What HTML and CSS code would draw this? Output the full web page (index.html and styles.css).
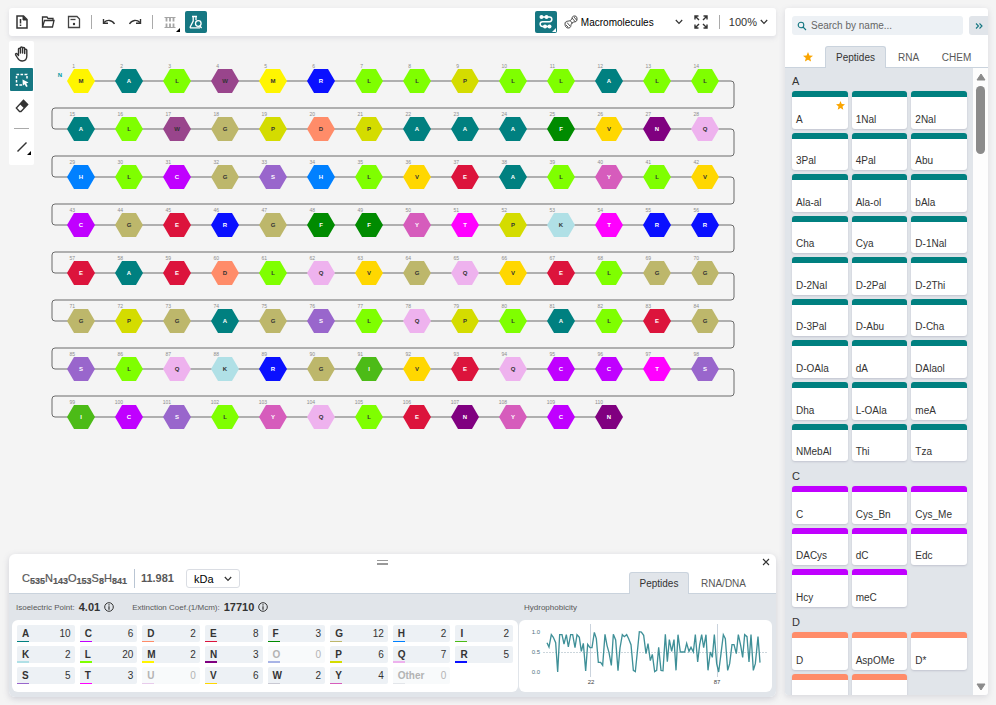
FILE: index.html
```html
<!DOCTYPE html>
<html lang="en">
<head>
<meta charset="utf-8">
<title>Macromolecules editor</title>
<link rel="stylesheet" href="styles.css">
</head>
<body>
<main class="editor">
  <header class="toolbar">
    <button class="tool" aria-label="New"><svg width="14" height="16" viewBox="0 0 14 16"><path d="M2 2h6.500l3.500 3.500V14H2z" fill="none" stroke="#333" stroke-width="1.500"/><path d="M8 2v4h4" fill="#333" stroke="#333"/><path d="M5.500 5v4.500M5.500 10.500v1.500" stroke="#333" stroke-width="1.500"/></svg></button>
    <button class="tool" aria-label="Open"><svg width="14" height="14" viewBox="0 0 14 14" fill="none" stroke="#333" stroke-width="1.300"><path d="M1.500 11.500V2H6l1 1.500h5V5"/><path d="M1.500 12 3.500 5.500H13L11.500 12z"/></svg></button>
    <button class="tool" aria-label="Save"><svg width="14" height="14" viewBox="0 0 14 14" fill="none" stroke="#444" stroke-width="1.300"><path d="M1.500 1.500H10L12.500 4v8.500h-11z"/><path d="M3.500 4.500h5"/><circle cx="7" cy="9" r="1.200" fill="#333" stroke="none"/></svg></button>
    <span class="divider"></span>
    <button class="tool" aria-label="Undo"><svg width="14" height="14" viewBox="0 0 14 14" fill="none" stroke="#333" stroke-width="1.400"><path d="M2 7.500C5 4.500 10 4.500 12.500 9"/><path d="M1.500 4v4.200H6"/></svg></button>
    <button class="tool" aria-label="Redo"><svg width="14" height="14" viewBox="0 0 14 14" fill="none" stroke="#333" stroke-width="1.400"><path d="M12 7.500C9 4.500 4 4.500 1.500 9"/><path d="M12.500 4v4.200H8"/></svg></button>
    <span class="divider"></span>
    <button class="tool has-corner" aria-label="Layout"><svg width="14" height="14" viewBox="0 0 14 14" stroke="#a5a5a5" stroke-width="1.200"><path d="M1.500 2.500h11M1.500 12.500h11"/><path d="M3.500 2.500v4M7 2.500v4M10.500 2.500v4M3.500 8.500v4M7 8.500v4M10.500 8.500v4" stroke-width="1.800"/></svg></button>
    <button class="tool is-on" aria-label="Calculate properties"><svg width="14" height="14" viewBox="0 0 14 14" fill="none" stroke="#fff" stroke-width="1.300"><path d="M3 1.500h5M4.200 2v4L1.300 11.800c-.3.600 0 1 .6 1H11M7 2v3"/><circle cx="9.300" cy="8.500" r="2.800"/><path d="m10.800 11 1.800 2"/></svg></button>

    <div class="toolbar-end">
      <button class="tool is-on has-corner" aria-label="Snake view"><svg width="16" height="16" viewBox="0 0 16 16" fill="none" stroke="#fff" stroke-width="1.500"><path d="M3 3h8.500a2.300 2.300 0 0 1 0 4.700H4.500a2.300 2.300 0 0 0 0 4.700H11"/><g fill="#fff" stroke="none"><circle cx="3.500" cy="3" r="2"/><circle cx="8.500" cy="3" r="2"/><circle cx="7" cy="12.400" r="2"/><circle cx="11.500" cy="12.400" r="2"/></g></svg></button>
      <label class="mode">
        <svg width="14" height="14" viewBox="0 0 14 14" fill="none" stroke="#444" stroke-width="1"><path d="M1 9C1 5 5 7 7 5s0-4 4-4M4 13c4 0 2-3 4-5s5 0 5-4M1 9c0 2 1 4 3 4M11 1c1.500 0 2 1.500 2 3"/><path d="M3 7.500 6 11M2 10l2 2M6.500 6l2 2.500M8 3l3.500 4M10 2l2.500 3" stroke-width=".9"/></svg>
        <select class="mode-select" aria-label="Editor mode"><option>Macromolecules</option></select>
        <svg class="chevron" width="8" height="6" viewBox="0 0 8 6"><path d="m.800 1 3.200 3.400L7.200 1"/></svg>
      </label>
      <button class="plain" aria-label="Fullscreen"><svg width="14" height="14" viewBox="0 0 14 14" stroke="#333" stroke-width="1.400" fill="none"><path d="M1 4.500V1h3.500M9.500 1H13v3.500M13 9.500V13H9.500M4.500 13H1V9.500M1 1l4 4M13 1 9 5M13 13 9 9M1 13l4-4"/></svg></button>
      <span class="divider"></span>
      <button class="zoom">100%<svg class="chevron" width="8" height="6" viewBox="0 0 8 6"><path d="m.800 1 3.200 3.400L7.200 1"/></svg></button>
    </div>
  </header>

  <section class="workspace">
    <nav class="rail" aria-label="Tools">
      <button class="rail-tool" aria-label="Hand"><svg width="16" height="16" viewBox="0 0 16 16" fill="none" stroke="#333" stroke-width="1.400" stroke-linejoin="round" stroke-linecap="round"><path d="M4.500 9.500V3.200a1 1 0 0 1 2 0V7 2a1 1 0 0 1 2.100 0v5V2.600a1 1 0 0 1 2.100 0V7.500 4.200a1 1 0 0 1 2.100 0V10c0 3-1.800 5-4.600 5-2.400 0-3.600-1.200-4.600-3L1.600 8.800c-.4-1 .8-1.600 1.500-.9z"/></svg></button>
      <button class="rail-tool is-on" aria-label="Select"><svg width="16" height="16" viewBox="0 0 16 16"><path d="M8 13H2.500V2.500H13V7" fill="none" stroke="#fff" stroke-width="1.500" stroke-dasharray="2.600 1.400"/><path d="m8.500 7.500 6 3-2.300 1 1.500 2.800-1.500.800-1.600-2.900-1.800 1.500z" fill="#fff"/></svg></button>
      <button class="rail-tool" aria-label="Erase"><svg width="14" height="14" viewBox="0 0 14 14"><path d="M8.500 1.300 12.700 5.500 6 12.500H4.500L1.300 9z" fill="#fff" stroke="#333" stroke-width="1.300"/><path d="M8.500 1.300 12.700 5.500 9 9.300 4.900 5.200z" fill="#333"/></svg></button>
      <span class="rail-divider"></span>
      <button class="rail-tool has-corner" aria-label="Bond"><svg width="14" height="14" viewBox="0 0 14 14"><path d="m2.500 11.500 9-9" stroke="#333" stroke-width="1.400"/></svg></button>
    </nav>
    <svg class="canvas" id="canvas" role="img" aria-label="Peptide chain"></svg>
  </section>

  <section class="props">
    <div class="props-head">
      <button class="grip" aria-label="Resize"></button>
      <button class="close" aria-label="Close"><svg width="8" height="8" viewBox="0 0 8 8"><path d="m1 1 6 6M7 1 1 7" stroke="#333" stroke-width="1.100"/></svg></button>
      <div class="formula">C<sub>535</sub>N<sub>143</sub>O<sub>153</sub>S<sub>8</sub>H<sub>841</sub></div>
      <div class="mass">11.981</div>
      <label class="unit"><select class="unit-select" aria-label="Mass unit"><option>kDa</option></select><svg class="chevron" width="8" height="6" viewBox="0 0 8 6"><path d="m.800 1 3.200 3.400L7.200 1"/></svg></label>
      <div class="props-tabs"><button class="tab is-active">Peptides</button><button class="tab">RNA/DNA</button></div>
    </div>
    <div class="props-body">
      <div class="facts">
        <span class="fact">Isoelectric Point: <b>4.01</b><svg width="10" height="10" viewBox="0 0 10 10"><circle cx="5" cy="5" r="4.300" fill="none" stroke="#333"/><path d="M5 2.300v1.200M5 4.300v3.500" stroke="#333" stroke-width="1.200"/></svg></span>
        <span class="fact">Extinction Coef.(1/Mcm): <b>17710</b><svg width="10" height="10" viewBox="0 0 10 10"><circle cx="5" cy="5" r="4.300" fill="none" stroke="#333"/><path d="M5 2.300v1.200M5 4.300v3.500" stroke="#333" stroke-width="1.200"/></svg></span>
      </div>
      <div class="chart-title">Hydrophobicity</div>
      <div class="box counts" id="counts"></div>
      <div class="box">
        <svg class="chart" viewBox="0 0 253 72" role="img" aria-label="Hydrophobicity">
          <path d="M24 32.500H248" stroke="#ccd6dc" stroke-dasharray="2 1"/>
          <path d="M71.500 4v53M198.500 4v53" stroke="#cad3dd"/>
          <svg x="25" y="2" width="218" height="56" viewBox="0 0 654 168"><polyline id="plot" fill="none" stroke="#3f9098" stroke-width="4"/></svg>
          <g class="axis"><text x="21" y="14" text-anchor="end">1.0</text><text x="21" y="34" text-anchor="end">0.5</text><text x="21" y="54" text-anchor="end">0.0</text></g>
          <g class="axis-x"><text x="72" y="64" text-anchor="middle">22</text><text x="198" y="64" text-anchor="middle">87</text></g>
        </svg>
      </div>
    </div>
  </section>
</main>

<aside class="library">
  <div class="search-row">
    <label class="search"><svg width="10" height="10" viewBox="0 0 10 10" fill="none" stroke="#167782" stroke-width="1.100"><circle cx="4" cy="4" r="2.800"/><path d="m6 6 3 3"/></svg><input type="text" placeholder="Search by name..." aria-label="Search by name"></label>
    <button class="collapse" aria-label="Hide library"><svg width="8" height="8" viewBox="0 0 8 8" fill="none" stroke="#167782" stroke-width="1.100"><path d="m1 1.500 2.500 2.500L1 6.500M4.500 1.500 7 4 4.500 6.500"/></svg></button>
  </div>
  <div class="library-tabs">
    <button class="tab" aria-label="Favorites"><svg width="10" height="10" viewBox="0 0 10 10"><path d="m5 0 1.400 3.400 3.600.300-2.800 2.300.9 3.600L5 7.700 1.900 9.600l.9-3.600L0 3.700l3.600-.3z" fill="#faa500"/></svg></button>
    <button class="tab is-active">Peptides</button><button class="tab">RNA</button><button class="tab">CHEM</button>
  </div>
  <div class="library-body">
    <div class="list" id="list"></div>
    <div class="scrollbar"><svg width="10" height="8" viewBox="0 0 10 8"><path d="M5 1 9 7H1z" fill="#8b8b8b" stroke="#8b8b8b" stroke-linejoin="round"/></svg><span class="thumb"></span><svg width="10" height="8" viewBox="0 0 10 8"><path d="M5 7 9 1H1z" fill="#8b8b8b" stroke="#8b8b8b" stroke-linejoin="round"/></svg></div>
  </div>
</aside>
<script src="script.js"></script>
</body>
</html>
```
FILE: styles.css
```css
* { box-sizing: border-box; }
body {
  margin: 0;
  height: 100vh;
  padding: 8px 8px 8px 9px;
  display: grid;
  grid-template-columns: minmax(0, 1fr) 203px;
  gap: 9px;
  background: #f4f4f4;
  color: #333;
  font-family: "Liberation Sans", Arial, sans-serif;
  font-size: 10px;
}
button, select, input { font: inherit; color: inherit; border: 0; background: none; padding: 0; margin: 0; }
svg { display: block; flex: none; }
.chevron path { fill: none; stroke: #333; stroke-width: 1.2; }

.editor { display: flex; flex-direction: column; min-width: 0; min-height: 0; }
.toolbar {
  display: flex;
  align-items: center;
  height: 28px;
  padding-right: 8px;
  background: #fff;
  border-radius: 3px;
  box-shadow: 0 2px 5px rgba(103, 104, 132, .15);
}
.tool { position: relative; width: 26px; height: 22px; display: grid; place-items: center; }
.tool.is-on { width: 22px; margin-left: 2px; background: #167782; border-radius: 2px; }
.has-corner { position: relative; }
.has-corner::after {
  content: "";
  position: absolute;
  right: 3px;
  bottom: 1px;
  border-left: 4px solid transparent;
  border-bottom: 4px solid #000;
}
.tool.has-corner.is-on::after { right: 1px; border-bottom-color: #fff; }
.divider { width: 1px; height: 14px; margin: 0 4px; background: #aaa; }
.toolbar-end { margin-left: auto; display: flex; align-items: center; }
.mode { position: relative; display: flex; align-items: center; gap: 3px; width: 119px; margin: 0 11px 0 7px; color: #000; }
.mode .chevron { position: absolute; right: 0; }
.mode-select { appearance: none; flex: 1; min-width: 0; font-size: 10px; outline: 0; }
.plain { width: 14px; height: 14px; }
.toolbar-end .divider { margin: 0 9px 0 11px; }
.zoom { display: flex; align-items: center; gap: 3px; font-size: 11px; }

.workspace { flex: 1; min-height: 0; display: flex; align-items: stretch; padding-top: 5px; }
.rail {
  align-self: flex-start;
  width: 25px;
  display: flex;
  flex-direction: column;
  align-items: center;
  gap: 3px;
  padding: 1px 0 7px;
  background: #fff;
  border-radius: 2px;
}
.rail-tool { width: 23px; height: 23px; display: grid; place-items: center; }
.rail-tool.is-on { background: #167782; border-radius: 1px; }
.rail-tool.has-corner::after { right: 2px; bottom: 3px; }
.rail-divider { width: 15px; height: 1px; margin: 8px 0 3px; background: #aaa; }
.canvas { flex: 1; min-width: 0; height: 100%; }
.bond { fill: none; stroke: #6b6b6b; stroke-width: 1; }
.number { font-size: 5px; fill: #8c8c8c; text-anchor: end; }
.letter { font-size: 6px; font-weight: bold; fill: #333; text-anchor: middle; }
.letter.light { fill: #fff; }
.terminus { font-size: 6px; font-weight: bold; fill: #009aa5; text-anchor: middle; }

.props {
  background: #fff;
  border-radius: 6px;
  overflow: hidden;
  box-shadow: 0 2px 6px rgba(103, 104, 132, .25);
}
.props-head {
  position: relative;
  height: 40px;
  padding: 15px 30px 0 13px;
  display: flex;
  border-bottom: 1px solid #cad3dd;
}
.grip { position: absolute; left: 368px; top: 6px; width: 11px; height: 5px; border: solid #999; border-width: 1px 0 2px; }
.close { position: absolute; right: 6px; top: 4px; }
.formula { padding-right: 7px; height: 19px; line-height: 18px; font-size: 11px; color: #585858; border-right: 1px solid #b9c5d3; -webkit-text-stroke: 0.2px #585858; }
.formula sub { font-size: 9px; font-weight: bold; line-height: 0; vertical-align: -2px; }
.mass { padding: 0 12px 0 6px; line-height: 19px; font-size: 11px; font-weight: bold; color: #585858; }
.unit { position: relative; height: 19px; }
.unit .chevron { position: absolute; right: 8px; top: 7px; }
.unit-select { appearance: none; width: 54px; height: 19px; padding: 0 7px; font-size: 11px; color: #000; border: 1px solid #dadde3; border-radius: 3px; }
.props-tabs { margin-left: auto; display: flex; height: 25px; padding-top: 3px; }
.tab { color: #585858; font-size: 10px; }
.tab.is-active { color: #333; background: #e1e5ea; border: 1px solid #cad3dd; border-bottom: 0; border-radius: 3px 3px 0 0; }
.props-tabs .tab { height: 22px; }
.props-tabs .is-active { width: 60px; margin-right: 12px; }
.props-body {
  display: grid;
  grid-template-columns: 2fr 1fr;
  grid-template-rows: 26px 72px;
  column-gap: 1px;
  padding: 0 4px 5px 3px;
  background: #e1e5ea;
}
.facts { display: flex; gap: 18px; padding-left: 4px; }
.fact { display: flex; align-items: center; gap: 4px; font-size: 8px; color: #585858; }
.fact b { font-size: 11px; color: #333; }
.chart-title { padding-left: 5px; line-height: 27px; font-size: 8px; color: #585858; }
.box { background: #fff; border-radius: 6px; min-width: 0; }
.counts {
  display: grid;
  grid-template-columns: repeat(8, minmax(0, 1fr));
  grid-auto-rows: 17px;
  align-content: start;
  gap: 4px 5px;
  padding: 5px;
}
.count {
  position: relative;
  display: flex;
  justify-content: space-between;
  align-items: center;
  padding: 0 4px 0 5px;
  font-size: 10px;
  background: #edf1f5;
  border-radius: 2px;
}
.count.none { color: #b3b3b3; background: #f8fafb; }
.count .mark { position: absolute; left: 0; bottom: 0; width: 12px; height: 1px; }
.count.thick .mark { height: 2px; }
.chart { width: 100%; height: 72px; }
.axis, .axis-x { font-size: 6px; fill: #4c7180; }
.axis-x { fill: #444; }

.library {
  display: flex;
  flex-direction: column;
  min-height: 0;
  margin-bottom: 2px;
  background: #fff;
  border-radius: 3px;
  overflow: hidden;
  box-shadow: 0 2px 6px rgba(103, 104, 132, .2);
}
.search-row { display: flex; gap: 6px; padding: 8px 0 11px 7px; }
.search { flex: 1; display: flex; align-items: center; gap: 4px; height: 19px; padding-left: 5px; background: #edf1f5; border-radius: 3px; }
.search input { flex: 1; min-width: 0; outline: 0; }
.search input::placeholder { color: #666; opacity: 1; }
.collapse { width: 19px; height: 19px; display: grid; place-items: center; background: #e1e5ea; border-radius: 3px 0 0 3px; }
.library-tabs { display: grid; grid-template-columns: 40px 61px 45px 51px; height: 22px; border-bottom: 1px solid #cad3dd; }
.library-tabs .tab { height: 22px; display: grid; place-items: center; }
.library-tabs .tab:first-child { padding-left: 6px; }
.library-body { flex: 1; min-height: 0; display: flex; background: #e1e5ea; }
.list { flex: 1; min-width: 0; overflow: hidden; padding: 6px 6px 0 7px; }
.group { margin-bottom: 8px; }
.group-title { margin: 0 0 3px; font-size: 11px; font-weight: normal; line-height: 14px; }
.cards { display: grid; grid-template-columns: repeat(3, minmax(0, 1fr)); gap: 4px; }
.card {
  position: relative;
  aspect-ratio: 40 / 27;
  display: flex;
  align-items: flex-end;
  padding: 0 0 4px 4px;
  text-align: left;
  background: #fff;
  border-top: 6px solid;
  border-radius: 3px;
  box-shadow: 0 1px 2px rgba(103, 104, 132, .25);
}
.card span { color: #333; }
.card .star { position: absolute; right: 3px; top: 4px; }
.scrollbar { width: 15px; background: #fdfdfd; display: flex; flex-direction: column; align-items: center; padding: 5px 0 4px; }
.thumb { width: 9px; height: 68px; margin: 5px 0 auto; background: #8b8b8b; border-radius: 5px; }
```
FILE: script.js
```js
const colors = {
  A: "#008080", C: "#c000ff", D: "#ff8c69", E: "#dc143c", F: "#008b00",
  G: "#bdb76b", H: "#0080ff", I: "#4cbb17", K: "#b0e0e6", L: "#7fff00",
  M: "#fff500", N: "#800080", P: "#d4dc00", Q: "#eeb2ee", R: "#0a10ff",
  S: "#9966cc", T: "#ff00ff", V: "#ffd700", W: "#99458c", Y: "#d65cbc"
};
const lightText = "ACEFHINRSTY";
const sequence =
  "MALWMRLLPLLALL" + "ALWGPDPAAAFVNQ" + "HLCGSHLVEALYLV" + "CGERGFFYTPKTRR" +
  "EAEDLQVGQVELGG" + "GPGAGSLQPLALEG" + "SLQKRGIVEQCCTS" + "ICSLYQLENYCN";

// Snake layout: 14 monomers per row on a 48px grid.
const perRow = 14, step = 48, left = 47, top0 = 40;
let chain = "";
const rows = Math.ceil(sequence.length / perRow);
for (let r = 0; r < rows; r++) {
  const y = top0 + r * step;
  const last = r === rows - 1;
  const endX = last ? left + ((sequence.length - 1) % perRow) * step : 697;
  let d = `M${left} ${y}H${endX}`;
  if (!last) {
    d += `q3 0 3 3V${y + 24}q0 3 -3 3H21q-3 0 -3 3V${y + step - 3}q0 3 3 3H${left}`;
  }
  chain += `<path class="bond" d="${d}"/>`;
}
[...sequence].forEach((c, i) => {
  const x = left + (i % perRow) * step;
  const y = top0 + Math.floor(i / perRow) * step;
  const light = lightText.includes(c) ? " light" : "";
  chain += `<path d="M${x - 14} ${y}l7 -12h14l7 12l-7 12h-14z" fill="${colors[c]}"/>` +
    `<text class="number" x="${x - 6}" y="${y - 13}">${i + 1}</text>` +
    `<text class="letter${light}" x="${x}" y="${y + 2}">${c}</text>`;
});
chain += `<text class="terminus" x="26" y="36">N</text>`;
document.getElementById("canvas").innerHTML = chain;

// Residue counts, three rows of eight.
const extra = { O: "#a8b4e6", U: "#e8ccec", W: "#c9c9d3", Other: "#e3e6ea" };
const counts = [
  ["A", 10], ["C", 6], ["D", 2], ["E", 8], ["F", 3], ["G", 12], ["H", 2], ["I", 2],
  ["K", 2], ["L", 20], ["M", 2], ["N", 3], ["O", 0], ["P", 6], ["Q", 7], ["R", 5],
  ["S", 5], ["T", 3], ["U", 0], ["V", 6], ["W", 2], ["Y", 4], ["Other", 0]
];
document.getElementById("counts").innerHTML = counts.map(([name, n], i) =>
  `<div class="count${n ? "" : " none"}${i > 7 && i < 16 ? " thick" : ""}"><b>${name}</b><span>${n}</span>` +
  `<i class="mark" style="background:${extra[name] || colors[name]}"></i></div>`).join("");

document.getElementById("plot").setAttribute("points",
  "9,62 15,75 22,38 28,46 35,62 41,150 47,38 54,38 60,66 67,38 73,75 80,38 86,38 93,77 99,38 106,46 112,88 " +
  "118,64 125,147 131,67 138,77 144,77 151,31 157,50 163,121 170,121 176,130 183,37 189,70 195,92 202,130 208,37 " +
  "215,54 222,146 228,78 235,38 241,44 248,38 254,50 261,68 268,145 274,149 280,90 286,29 292,30 299,40 306,95 " +
  "312,65 319,116 325,97 332,149 338,145 344,76 351,145 357,146 364,37 370,119 376,53 383,88 390,53 396,145 " +
  "402,38 409,90 422,90 428,64 435,88 441,76 448,90 454,38 461,120 467,68 473,38 479,77 486,38 492,145 499,90 " +
  "505,106 511,38 518,125 524,150 531,95 538,38 544,50 551,145 557,125 564,68 570,68 577,95 583,38 590,70 " +
  "596,106 602,38 609,44 615,120 621,38 628,145 634,125 642,44 648,122");

const groups = [
  ["A", ["A", "1Nal", "2Nal", "3Pal", "4Pal", "Abu", "Ala-al", "Ala-ol", "bAla", "Cha", "Cya", "D-1Nal",
    "D-2Nal", "D-2Pal", "D-2Thi", "D-3Pal", "D-Abu", "D-Cha", "D-OAla", "dA", "DAlaol",
    "Dha", "L-OAla", "meA", "NMebAl", "Thi", "Tza"]],
  ["C", ["C", "Cys_Bn", "Cys_Me", "DACys", "dC", "Edc", "Hcy", "meC"]],
  ["D", ["D", "AspOMe", "D*", "", ""]]
];
const star = `<svg class="star" width="9" height="9" viewBox="0 0 10 10"><path d="m5 0 1.400 3.400 3.600.300-2.800 2.300.9 3.600L5 7.700 1.900 9.600l.9-3.600L0 3.700l3.600-.3z" fill="#faa500"/></svg>`;
document.getElementById("list").innerHTML = groups.map(([title, names]) =>
  `<section class="group"><h2 class="group-title">${title}</h2><div class="cards">` +
  names.map(n => `<button class="card" style="border-color:${colors[title]}"><span>${n}</span>${n === "A" ? star : ""}</button>`).join("") +
  `</div></section>`).join("");
```
